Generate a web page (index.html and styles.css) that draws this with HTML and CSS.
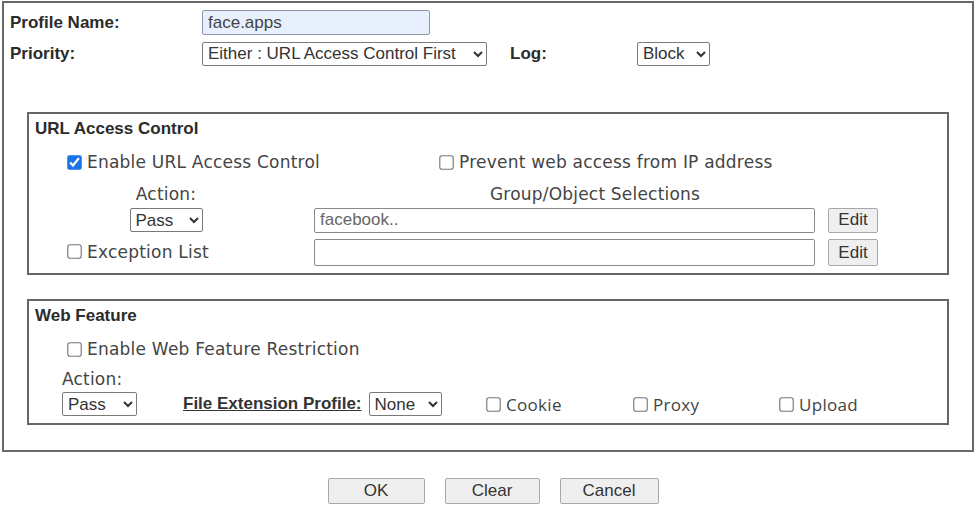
FILE: index.html
```html
<!DOCTYPE html>
<html lang="en">
  <head>
    <meta charset="UTF-8" />
    <title>URL Content Filter Profile</title>
    <link rel="stylesheet" href="styles.css">
  </head>
  <body>
    <div class="frame">
      <!-- Profile -->
      <div class="top-row">
        <div class="top-label">Profile Name:</div>
        <input class="name-input" type="text" value="face.apps" />
      </div>
      <div class="top-row">
        <div class="top-label">Priority:</div>
        <select class="sel sel-priority">
          <option selected>Either : URL Access Control First</option>
          <option>Either : Web Feature First</option>
        </select>
        <div class="log-label">Log:</div>
        <select class="sel sel-log">
          <option>None</option>
          <option>Pass</option>
          <option selected>Block</option>
          <option>All</option>
        </select>
      </div>

      <!-- URL Access Control -->
      <div class="group group-url">
        <div class="group-title">URL Access Control</div>
        <div class="url-row row-check">
          <div class="c1">
            <label class="chk"><input type="checkbox" checked />Enable URL Access Control</label>
          </div>
          <div class="c2 prevent">
            <label class="chk"><input type="checkbox" />Prevent web access from IP address</label>
          </div>
        </div>
        <div class="url-row row-labels">
          <div class="c1"><div class="act">Action:</div></div>
          <div class="c2 sel-title">Group/Object Selections</div>
        </div>
        <div class="url-row row-select">
          <div class="c1">
            <div class="act">
              <select class="sel sel-pass">
                <option selected>Pass</option>
                <option>Block</option>
              </select>
            </div>
          </div>
          <div class="c2"><input class="obj-input" type="text" value="facebook.." readonly /></div>
          <div class="c3"><button class="btn-edit">Edit</button></div>
        </div>
        <div class="url-row row-except">
          <div class="c1">
            <label class="chk"><input type="checkbox" />Exception List</label>
          </div>
          <div class="c2"><input class="obj-input obj-tall" type="text" value="" readonly /></div>
          <div class="c3"><button class="btn-edit btn-tall">Edit</button></div>
        </div>
      </div>

      <!-- Web Feature -->
      <div class="group group-web">
        <div class="group-title">Web Feature</div>
        <div class="web-check">
          <label class="chk"><input type="checkbox" />Enable Web Feature Restriction</label>
        </div>
        <div class="web-action">Action:</div>
        <div class="web-row">
          <div class="w-pass">
            <select class="sel sel-wpass">
              <option selected>Pass</option>
              <option>Block</option>
            </select>
          </div>
          <div class="w-ext">
            <a href="#" class="ext-link">File Extension Profile:</a>
            <select class="sel sel-none">
              <option selected>None</option>
            </select>
          </div>
          <div class="w-cookie">
            <label class="chk chk-alt"><input type="checkbox" />Cookie</label>
          </div>
          <div class="w-proxy">
            <label class="chk chk-alt"><input type="checkbox" />Proxy</label>
          </div>
          <div class="w-upload">
            <label class="chk chk-alt"><input type="checkbox" />Upload</label>
          </div>
        </div>
      </div>
    </div>

    <!-- Buttons -->
    <div class="actions">
      <button class="btn btn-ok">OK</button>
      <button class="btn btn-clear">Clear</button>
      <button class="btn btn-cancel">Cancel</button>
    </div>
  </body>
</html>
```

FILE: styles.css
```css
* {
  box-sizing: border-box;
}
body {
  margin: 0;
  padding: 1px 2px 0;
  background: #fff;
  font-family: "Liberation Sans", Arial, sans-serif;
  font-size: 17px;
  color: #2b2b2b;
}
.frame {
  width: 972px;
  height: 451px;
  border: 2px solid #6a6a6a;
  padding-top: 4px;
}
/* Top rows */
.top-row {
  display: flex;
  align-items: center;
  height: 31px;
  padding-left: 6px;
}
.top-label {
  width: 192px;
  flex: none;
  font-weight: bold;
}
.name-input {
  width: 228px;
  height: 25px;
  margin: 0;
  padding: 0 5px;
  font-family: "Liberation Sans", Arial, sans-serif;
  font-size: 17px;
  color: #444;
  background: #e8f0fe;
  border: 1px solid #8f98a8;
  border-radius: 2px;
}
.sel {
  height: 24px;
  margin: 0;
  padding: 0 1px;
  font-family: "Liberation Sans", Arial, sans-serif;
  font-size: 17px;
  color: #333;
  background: #fff;
  border: 1px solid #7a7a7a;
  border-radius: 2px;
}
.sel-priority {
  width: 285px;
}
.log-label {
  width: 127px;
  margin-left: 23px;
  font-weight: bold;
}
.sel-log {
  width: 73px;
}
/* Groups */
.group {
  margin: 0 23px;
  border: 2px solid #666;
}
.group-url {
  margin-top: 43px;
  height: 163px;
}
.group-web {
  margin-top: 24px;
  height: 126px;
}
.group-title {
  height: 29px;
  display: flex;
  align-items: center;
  padding-left: 6px;
  font-weight: bold;
}
.chk {
  display: inline-flex;
  align-items: center;
  white-space: nowrap;
  font-family: "DejaVu Sans", Verdana, sans-serif;
  font-size: 17px;
  letter-spacing: 0.22px;
  color: #444;
}
.chk input {
  width: 13px;
  height: 13px;
  margin: 0 6px 0 0;
  accent-color: #1a73e8;
  transform: scale(1.12);
}
.chk-alt {
  font-family: "Open Sans", "DejaVu Sans", sans-serif;
  letter-spacing: 0.3px;
}
/* URL Access Control */
.url-row {
  display: flex;
  align-items: center;
  padding-left: 39px;
}
.c1 {
  width: 246px;
  flex: none;
  white-space: nowrap;
}
.c2 {
  width: 501px;
  flex: none;
}
.c3 {
  margin-left: 13px;
}
.row-check {
  height: 40px;
}
.prevent {
  padding-left: 126px;
}
.row-labels {
  height: 22px;
  font-family: "DejaVu Sans", Verdana, sans-serif;
  letter-spacing: 0.2px;
  color: #444;
}
.act {
  width: 196px;
  text-align: center;
}
.sel-title {
  padding-left: 176px;
}
.row-select {
  height: 30px;
}
.row-except {
  height: 35px;
}
.sel-pass {
  width: 73px;
}
.obj-input {
  width: 501px;
  height: 25px;
  margin: 0;
  padding: 0 5px;
  font-family: "Liberation Sans", Arial, sans-serif;
  font-size: 17px;
  color: #666;
  background: #fff;
  border: 1px solid #8a8a8a;
  border-radius: 2px;
}
.obj-tall {
  height: 27px;
}
.btn-edit,
.btn {
  margin: 0;
  padding: 0;
  font-family: "Liberation Sans", Arial, sans-serif;
  font-size: 17px;
  color: #333;
  background: #efefef;
  border: 1px solid #a8a8a8;
  border-radius: 2px;
}
.btn-edit {
  width: 50px;
  height: 25px;
}
.btn-tall {
  height: 27px;
}
/* Web Feature */
.web-check {
  height: 38px;
  display: flex;
  align-items: center;
  padding-left: 39px;
}
.web-action {
  height: 21px;
  display: flex;
  align-items: center;
  padding-left: 33px;
  font-family: "DejaVu Sans", Verdana, sans-serif;
  letter-spacing: 0.2px;
  color: #444;
}
.web-row {
  display: flex;
  align-items: center;
  height: 30px;
  padding-left: 33px;
}
.w-pass {
  width: 121px;
  flex: none;
}
.sel-wpass {
  width: 75px;
}
.w-ext {
  width: 304px;
  flex: none;
  display: flex;
  align-items: center;
}
.ext-link {
  font-weight: bold;
  color: #333;
  text-decoration: underline;
  margin-right: 7px;
}
.sel-none {
  width: 73px;
}
.w-cookie {
  width: 147px;
  flex: none;
}
.w-proxy {
  width: 146px;
  flex: none;
}
/* Bottom buttons */
.actions {
  display: flex;
  justify-content: center;
  gap: 20px;
  margin-top: 26px;
  padding-left: 10px;
}
.btn {
  height: 26px;
}
.btn-ok {
  width: 97px;
}
.btn-clear {
  width: 95px;
}
.btn-cancel {
  width: 99px;
}
```
